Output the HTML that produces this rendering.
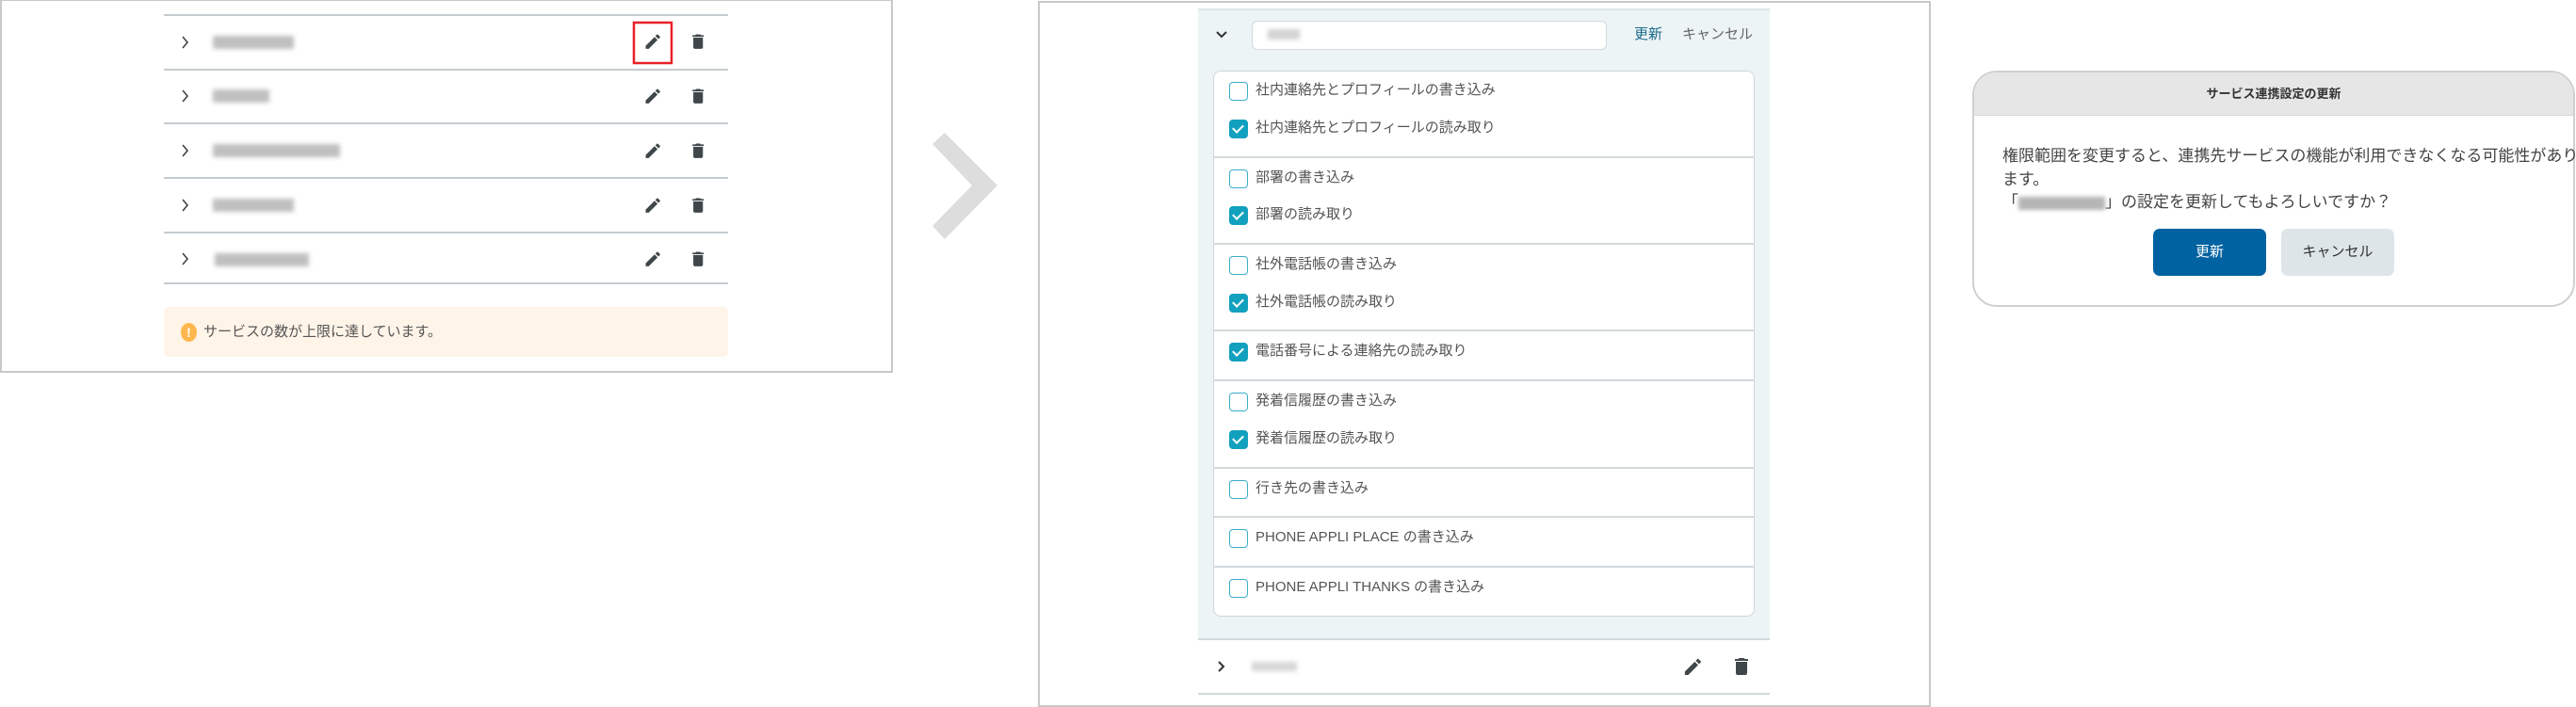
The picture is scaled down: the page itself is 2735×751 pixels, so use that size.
<!DOCTYPE html>
<html><head><meta charset="utf-8"><style>
*{margin:0;padding:0;box-sizing:border-box}
body{width:2735px;height:751px;background:#fff;position:relative;overflow:hidden;font-family:"Liberation Sans","Noto Sans CJK JP",sans-serif;color:#555}
.a{position:absolute}
.hl{position:absolute;height:2px;background:#c5cccf}
.blur{position:absolute;height:14px;background:#b5b5b5;filter:blur(2.5px);opacity:.85}
.cb{position:absolute;left:1305px;width:20px;height:20px;border:1.6px solid #3aaecb;border-radius:4px;background:#fff}
.cb.on{background:#12a0bf;border-color:#12a0bf}
.cb.on::after{content:"";position:absolute;left:5px;top:2px;width:5px;height:9px;border:solid #fff;border-width:0 2.4px 2.4px 0;transform:rotate(45deg)}
.lb{position:absolute;left:1333px;font-size:15px;line-height:20px;color:#555;white-space:nowrap}
.sep{position:absolute;left:1288px;width:575px;height:2px;background:#d3d9dc}
</style></head><body>

<!-- LEFT PANEL -->
<div class="a" style="left:0;top:0;width:948px;height:396px;border:2px solid #c8c8c8;border-top-width:1px"></div>
<div class="hl" style="left:174px;top:15px;width:599px"></div>
<div class="hl" style="left:174px;top:73px;width:599px"></div>
<div class="hl" style="left:174px;top:130px;width:599px"></div>
<div class="hl" style="left:174px;top:188px;width:599px"></div>
<div class="hl" style="left:174px;top:246px;width:599px"></div>
<div class="hl" style="left:174px;top:300px;width:599px"></div>

<svg class="a" style="left:0;top:0" width="948" height="320">
 <g fill="none" stroke="#444" stroke-width="1.6">
  <path d="M194 39 L199 45 L194 51"/><path d="M194 96 L199 102 L194 108"/><path d="M194 154 L199 160 L194 166"/><path d="M194 212 L199 218 L194 224"/><path d="M194 269 L199 275 L194 281"/>
 </g>
 <g fill="#40474b">
  <g transform="translate(683,34) scale(0.85)"><path d="M3 17.25V21h3.75L17.81 9.94l-3.75-3.75L3 17.25zM20.71 7.04a1 1 0 000-1.41l-2.34-2.34a1 1 0 00-1.41 0l-1.83 1.830 3.75 3.75 1.83-1.83z"/></g>
  <g transform="translate(683,92) scale(0.85)"><path d="M3 17.25V21h3.75L17.81 9.94l-3.75-3.75L3 17.25zM20.71 7.04a1 1 0 000-1.41l-2.34-2.34a1 1 0 00-1.41 0l-1.83 1.83 3.75 3.75 1.83-1.83z"/></g>
  <g transform="translate(683,150) scale(0.85)"><path d="M3 17.25V21h3.75L17.81 9.94l-3.75-3.75L3 17.25zM20.71 7.04a1 1 0 000-1.41l-2.34-2.34a1 1 0 00-1.41 0l-1.83 1.83 3.75 3.75 1.83-1.83z"/></g>
  <g transform="translate(683,208) scale(0.85)"><path d="M3 17.25V21h3.75L17.81 9.94l-3.75-3.75L3 17.25zM20.71 7.04a1 1 0 000-1.41l-2.34-2.34a1 1 0 00-1.41 0l-1.83 1.83 3.75 3.75 1.83-1.83z"/></g>
  <g transform="translate(683,265) scale(0.85)"><path d="M3 17.25V21h3.75L17.81 9.94l-3.75-3.75L3 17.25zM20.71 7.04a1 1 0 000-1.41l-2.34-2.34a1 1 0 00-1.41 0l-1.83 1.83 3.75 3.75 1.83-1.83z"/></g>
  <g transform="translate(731,34) scale(0.85)"><path d="M6 19c0 1.1.9 2 2 2h8c1.1 0 2-.9 2-2V7H6v12zM19 4h-3.5l-1-1h-5l-1 1H5v2h14V4z"/></g>
  <g transform="translate(731,92) scale(0.85)"><path d="M6 19c0 1.1.9 2 2 2h8c1.1 0 2-.9 2-2V7H6v12zM19 4h-3.5l-1-1h-5l-1 1H5v2h14V4z"/></g>
  <g transform="translate(731,150) scale(0.85)"><path d="M6 19c0 1.1.9 2 2 2h8c1.1 0 2-.9 2-2V7H6v12zM19 4h-3.5l-1-1h-5l-1 1H5v2h14V4z"/></g>
  <g transform="translate(731,208) scale(0.85)"><path d="M6 19c0 1.1.9 2 2 2h8c1.1 0 2-.9 2-2V7H6v12zM19 4h-3.5l-1-1h-5l-1 1H5v2h14V4z"/></g>
  <g transform="translate(731,265) scale(0.85)"><path d="M6 19c0 1.1.9 2 2 2h8c1.1 0 2-.9 2-2V7H6v12zM19 4h-3.5l-1-1h-5l-1 1H5v2h14V4z"/></g>
 </g>
 <rect x="673" y="24" width="40" height="43" fill="none" stroke="#e8202a" stroke-width="2.5"/>
</svg>
<div class="blur" style="left:226px;top:38px;width:86px"></div>
<div class="blur" style="left:226px;top:95px;width:60px"></div>
<div class="blur" style="left:226px;top:153px;width:135px"></div>
<div class="blur" style="left:226px;top:211px;width:86px"></div>
<div class="blur" style="left:228px;top:269px;width:100px"></div>

<div class="a" style="left:174px;top:326px;width:599px;height:53px;background:#fff4e8;border-radius:5px"></div>
<div class="a" style="left:192px;top:343px;width:17px;height:20px;border-radius:50%;background:#ffb74d;color:#fff;font-size:14px;font-weight:bold;text-align:center;line-height:20px">!</div>
<div class="a" style="left:216px;top:343px;font-size:15px;line-height:20px;color:#555">サービスの数が上限に達しています。</div>

<!-- ARROW -->
<svg class="a" style="left:0;top:0" width="1100" height="300"><polygon points="990,153 1003,141 1059,197 1003,254 990,240 1032,197" fill="#dddddd"/></svg>

<!-- MIDDLE PANEL -->
<div class="a" style="left:1102px;top:1px;width:948px;height:750px;border:2px solid #c8c8c8"></div>
<div class="a" style="left:1272px;top:9px;width:607px;height:670px;background:#edf4f6;border-top:2px solid #dde4e7"></div>
<svg class="a" style="left:1288px;top:30px" width="20" height="14"><path d="M4 4 L9 9 L14 4" fill="none" stroke="#333" stroke-width="2"/></svg>
<div class="a" style="left:1329px;top:22px;width:377px;height:31px;background:#fff;border:1px solid #d4dadd;border-radius:6px"></div>
<div class="blur" style="left:1346px;top:31px;width:34px;height:11px;opacity:.6"></div>
<div class="a" style="left:1735px;top:27px;font-size:15px;line-height:20px;color:#1a6a8a">更新</div>
<div class="a" style="left:1786px;top:27px;font-size:15px;line-height:20px;color:#666">キャンセル</div>

<div class="a" style="left:1288px;top:75px;width:575px;height:580px;background:#fff;border:1px solid #cfd6da;border-radius:8px"></div>
<div class="cb" style="top:87px"></div><div class="lb" style="top:86px">社内連絡先とプロフィールの書き込み</div>
<div class="cb on" style="top:127px"></div><div class="lb" style="top:126px">社内連絡先とプロフィールの読み取り</div>
<div class="sep" style="top:166px"></div>
<div class="cb" style="top:180px"></div><div class="lb" style="top:179px">部署の書き込み</div>
<div class="cb on" style="top:219px"></div><div class="lb" style="top:218px">部署の読み取り</div>
<div class="sep" style="top:258px"></div>
<div class="cb" style="top:272px"></div><div class="lb" style="top:271px">社外電話帳の書き込み</div>
<div class="cb on" style="top:312px"></div><div class="lb" style="top:311px">社外電話帳の読み取り</div>
<div class="sep" style="top:350px"></div>
<div class="cb on" style="top:364px"></div><div class="lb" style="top:363px">電話番号による連絡先の読み取り</div>
<div class="sep" style="top:403px"></div>
<div class="cb" style="top:417px"></div><div class="lb" style="top:416px">発着信履歴の書き込み</div>
<div class="cb on" style="top:457px"></div><div class="lb" style="top:456px">発着信履歴の読み取り</div>
<div class="sep" style="top:496px"></div>
<div class="cb" style="top:510px"></div><div class="lb" style="top:509px">行き先の書き込み</div>
<div class="sep" style="top:548px"></div>
<div class="cb" style="top:562px"></div><div class="lb" style="top:561px">PHONE APPLI PLACE の書き込み</div>
<div class="sep" style="top:601px"></div>
<div class="cb" style="top:615px"></div><div class="lb" style="top:614px">PHONE APPLI THANKS の書き込み</div>

<div class="hl" style="left:1272px;top:678px;width:607px;background:#d3d9dc"></div>
<svg class="a" style="left:1288px;top:698px" width="20" height="20"><path d="M6 5 L11 10 L6 15" fill="none" stroke="#333" stroke-width="2"/></svg>
<div class="blur" style="left:1329px;top:703px;width:48px;height:10px;opacity:.55"></div>
<svg class="a" style="left:1786px;top:696px" width="80" height="26">
 <g fill="#40474b">
  <g transform="translate(0,1) scale(0.95)"><path d="M3 17.25V21h3.75L17.81 9.94l-3.75-3.75L3 17.25zM20.71 7.04a1 1 0 000-1.41l-2.34-2.34a1 1 0 00-1.41 0l-1.83 1.83 3.75 3.75 1.83-1.83z"/></g>
  <g transform="translate(51,0) scale(1.0)"><path d="M6 19c0 1.1.9 2 2 2h8c1.1 0 2-.9 2-2V7H6v12zM19 4h-3.5l-1-1h-5l-1 1H5v2h14V4z"/></g>
 </g>
</svg>
<div class="hl" style="left:1272px;top:736px;width:607px;background:#d3d9dc"></div>

<!-- DIALOG -->
<div class="a" style="left:2094px;top:75px;width:640px;height:251px;border:2px solid #d0d0d0;border-radius:26px;overflow:hidden;background:#fff">
 <div style="height:46px;background:#e6e6e6;border-bottom:1px solid #d8d8d8;text-align:center;font-size:13px;font-weight:bold;color:#333;line-height:46px">サービス連携設定の更新</div>
</div>
<div class="a" style="left:2126px;top:154px;font-size:17px;line-height:24.5px;color:#444;white-space:nowrap">権限範囲を変更すると、連携先サービスの機能が利用できなくなる可能性があり<br>ます。<br>「<span style="display:inline-block;width:92px;height:14px;background:#b5b5b5;filter:blur(2px);vertical-align:middle"></span>」の設定を更新してもよろしいですか？</div>
<div class="a" style="left:2286px;top:243px;width:120px;height:50px;background:#0062a0;border-radius:7px;color:#fff;font-size:15px;text-align:center;line-height:50px">更新</div>
<div class="a" style="left:2422px;top:243px;width:120px;height:50px;background:#dde5e8;border-radius:7px;color:#333;font-size:15px;text-align:center;line-height:50px">キャンセル</div>
</body></html>
